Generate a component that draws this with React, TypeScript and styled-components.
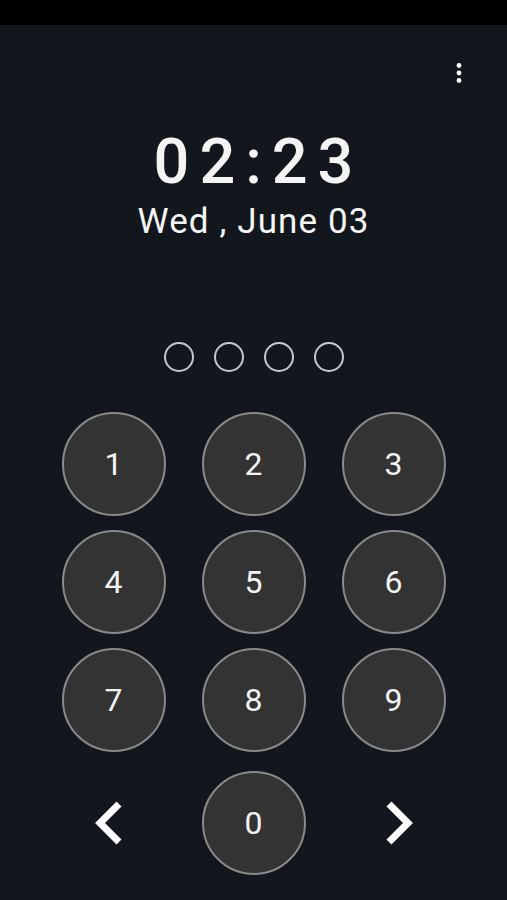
import styled, { createGlobalStyle } from "styled-components";

const GlobalStyle = createGlobalStyle`
  html, body {
    margin: 0;
    padding: 0;
    background: #11171c;
  }
  body {
    font-family: Roboto, "Noto Sans", "Liberation Sans", sans-serif;
    color: #f4f4f4;
  }
`;

const KEYS = ["1", "2", "3", "4", "5", "6", "7", "8", "9"];

export default function App() {
  return (
    <>
      <GlobalStyle />
      <Screen>
        <StatusBar />
        <TopBar>
          <MenuButton aria-label="More options">
            <svg width="20" height="20" viewBox="0 0 20 20">
              <circle cx="10" cy="2.5" r="2.4" fill="#fff" />
              <circle cx="10" cy="10" r="2.4" fill="#fff" />
              <circle cx="10" cy="17.5" r="2.4" fill="#fff" />
            </svg>
          </MenuButton>
        </TopBar>

        <Time>02:23</Time>
        <DateLine>Wed , June 03</DateLine>

        <PinDots>
          {[0, 1, 2, 3].map((i) => (
            <PinDot key={i} />
          ))}
        </PinDots>

        <Keypad>
          {KEYS.map((k) => (
            <Key key={k}>{k}</Key>
          ))}
        </Keypad>

        <BottomRow>
          <Arrow aria-label="Previous">
            <svg width="44" height="44" viewBox="0 0 44 44">
              <polyline
                points="27,3 8,22 27,41"
                fill="none"
                stroke="#fff"
                strokeWidth="7"
              />
            </svg>
          </Arrow>
          <Key>0</Key>
          <Arrow aria-label="Next">
            <svg width="44" height="44" viewBox="0 0 44 44">
              <polyline
                points="17,3 36,22 17,41"
                fill="none"
                stroke="#fff"
                strokeWidth="7"
              />
            </svg>
          </Arrow>
        </BottomRow>
      </Screen>
    </>
  );
}

const Screen = styled.div`
  min-height: 900px;
  display: flex;
  flex-direction: column;
  align-items: center;
  background: #11171c;
`;

const StatusBar = styled.div`
  align-self: stretch;
  height: 25px;
  background: #000;
`;

const TopBar = styled.div`
  align-self: stretch;
  display: flex;
  justify-content: flex-end;
  padding: 38px 38px 0 0;
`;

const MenuButton = styled.button`
  width: 20px;
  height: 20px;
  padding: 0;
  border: none;
  background: none;
  display: block;

  svg {
    display: block;
  }
`;

const Time = styled.div`
  margin-top: 47px;
  font-size: 63px;
  line-height: 63px;
  font-weight: 500;
  letter-spacing: 10px;
  padding-left: 10px;
`;

const DateLine = styled.div`
  margin-top: 11px;
  font-size: 35px;
  line-height: 35px;
  font-weight: 400;
  letter-spacing: 1.1px;
`;

const PinDots = styled.div`
  margin-top: 103px;
  display: flex;
  gap: 20px;
`;

const PinDot = styled.span`
  width: 30px;
  height: 30px;
  box-sizing: border-box;
  border: 2.5px solid #c6cacf;
  border-radius: 50%;
`;

const Keypad = styled.div`
  margin-top: 40px;
  display: grid;
  grid-template-columns: repeat(3, 104px);
  column-gap: 36px;
  row-gap: 14px;
`;

const BottomRow = styled(Keypad)`
  margin-top: 19px;
`;

const Key = styled.button`
  width: 104px;
  height: 104px;
  box-sizing: border-box;
  border-radius: 50%;
  border: 2px solid #8a8a8a;
  background: #333333;
  color: #f2f2f2;
  font-family: Roboto, "Noto Sans", sans-serif;
  font-size: 32px;
  font-weight: 400;
  display: flex;
  align-items: center;
  justify-content: center;
  padding: 0;
`;

const Arrow = styled.button`
  border: none;
  background: none;
  padding: 0;
  display: flex;
  align-items: center;
  justify-content: center;

  svg {
    display: block;
  }
`;
